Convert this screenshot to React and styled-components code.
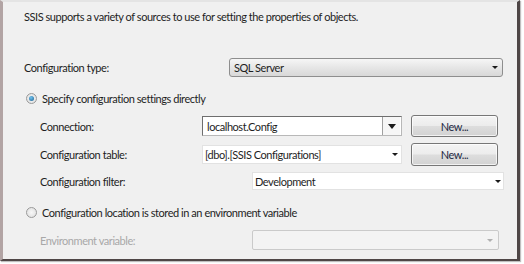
import React from "react";
import styled, { createGlobalStyle } from "styled-components";

const GlobalStyle = createGlobalStyle`
  html, body {
    margin: 0;
    padding: 0;
    background: #ffffff;
  }
  body {
    font-family: Lato, "Open Sans", "Liberation Sans", sans-serif;
    font-size: 11px;
    letter-spacing: -0.45px;
    color: #1e1e1e;
  }
`;

const Page = styled.div`
  width: 524px;
  height: 264px;
  background: #ffffff;
  overflow: hidden;
`;

const Panel = styled.div`
  box-sizing: border-box;
  width: 520px;
  height: 261px;
  background: #f0f0f0;
  border-left: 3px solid #b2a4a4;
  border-top: 2px solid #e4e4e4;
  border-right: 3px solid #4e4646;
  border-bottom: 2px solid #4e4646;
  box-shadow: 1px 1px 1px rgba(0, 0, 0, 0.25);
  display: flex;
  flex-direction: column;
  padding-left: 21px;
`;

const Description = styled.div`
  margin-top: 8px;
  height: 14px;
  line-height: 14px;
`;

const Row = styled.div`
  display: flex;
  align-items: center;
  height: ${p => p.h || 20}px;
  margin-top: ${p => p.top || 0}px;
  padding-left: ${p => p.indent || 0}px;
`;

const Label = styled.div`
  width: ${p => p.w}px;
  flex-shrink: 0;
  color: ${p => (p.disabled ? "#a8a8a8" : "#1e1e1e")};
`;

const Radio = styled.span`
  box-sizing: border-box;
  width: 11px;
  height: 11px;
  border-radius: 50%;
  border: 1px solid #9a9a9a;
  background: radial-gradient(circle, #f8f8f8 0%, #dcdcdc 100%);
  margin-left: 2px;
  margin-right: 5px;
  display: flex;
  align-items: center;
  justify-content: center;
  &::after {
    content: "";
    width: 5px;
    height: 5px;
    border-radius: 50%;
    background: ${p =>
      p.checked ? "radial-gradient(circle at 40% 35%, #6fc3f0, #1c5d8c)" : "transparent"};
  }
`;

const Dropdown = styled.div`
  box-sizing: border-box;
  width: 274px;
  height: 19px;
  border: 1px solid #8e8e8e;
  border-radius: 3px;
  background: linear-gradient(#f6f6f6, #e6e6e6 50%, #d8d8d8);
  display: flex;
  align-items: center;
  justify-content: space-between;
  padding: 0 4px 0 4px;
`;

const Combo = styled.div`
  box-sizing: border-box;
  width: ${p => p.w}px;
  height: ${p => p.h || 20}px;
  background: ${p => (p.disabled ? "#f3f3f3" : "#ffffff")};
  border: 1px solid ${p => p.border || "#e2e2e2"};
  border-radius: ${p => (p.disabled ? 2 : 0)}px;
  display: flex;
  align-items: center;
  justify-content: space-between;
  padding-left: ${p => p.pad ?? 4}px;
  padding-right: ${p => p.padR ?? 4}px;
`;

const SunkenCombo = styled(Combo)`
  border-top-color: #6e6e6e;
  border-left-color: #6e6e6e;
  border-right-color: #b8b8b8;
  border-bottom-color: #b8b8b8;
  padding-right: 1px;
`;

const ArrowBox = styled.div`
  box-sizing: border-box;
  width: 18px;
  height: 18px;
  border-left: 1px solid #a0a0a0;
  display: flex;
  align-items: center;
  justify-content: center;
  background: #f6f6f6;
`;

const Arrow = styled.span`
  width: 0;
  height: 0;
  border-left: ${p => (p.big ? 4 : 3)}px solid transparent;
  border-right: ${p => (p.big ? 4 : 3)}px solid transparent;
  border-top: ${p => (p.big ? 5 : 3)}px solid ${p => p.color || "#1a1a1a"};
`;

const Button = styled.div`
  box-sizing: border-box;
  width: 87px;
  height: ${p => p.h || 22}px;
  margin-left: 9px;
  border: 1px solid #777777;
  border-radius: 3px;
  background: linear-gradient(#f4f4f4, #ececec 48%, #dddddd 52%, #d2d2d2);
  box-shadow: inset 0 0 0 1px rgba(255, 255, 255, 0.7);
  display: flex;
  align-items: center;
  justify-content: center;
  color: #1e2a44;
`;

const App = () => {
  return (
    <Page>
      <GlobalStyle />
      <Panel>
        <Description>
          SSIS supports a variety of sources to use for setting the properties of objects.
        </Description>

        <Row top={34} h={19}>
          <Label w={205}>Configuration type:</Label>
          <Dropdown>
            <span>SQL Server</span>
            <Arrow />
          </Dropdown>
        </Row>

        <Row top={13} h={16}>
          <Radio checked />
          <span>Specify configuration settings directly</span>
        </Row>

        <Row top={9} h={22} indent={16}>
          <Label w={162}>Connection:</Label>
          <SunkenCombo w={200} h={20}>
            <span>localhost.Config</span>
            <ArrowBox>
              <Arrow big />
            </ArrowBox>
          </SunkenCombo>
          <Button>New...</Button>
        </Row>

        <Row top={6} h={23} indent={16}>
          <Label w={162}>Configuration table:</Label>
          <Combo w={200} h={19} pad={2} padR={3}>
            <span>[dbo].[SSIS Configurations]</span>
            <Arrow />
          </Combo>
          <Button h={23}>New...</Button>
        </Row>

        <Row top={6} h={18} indent={16}>
          <Label w={212}>Configuration filter:</Label>
          <Combo w={252} h={18} pad={2} padR={2}>
            <span>Development</span>
            <Arrow />
          </Combo>
        </Row>

        <Row top={14} h={16}>
          <Radio />
          <span>Configuration location is stored in an environment variable</span>
        </Row>

        <Row top={10} h={20} indent={16}>
          <Label w={212} disabled>
            Environment variable:
          </Label>
          <Combo w={247} h={20} disabled border="#cacaca" padR={5}>
            <span />
            <Arrow color="#b0b0b0" />
          </Combo>
        </Row>
      </Panel>
    </Page>
  );
};

export default App;
